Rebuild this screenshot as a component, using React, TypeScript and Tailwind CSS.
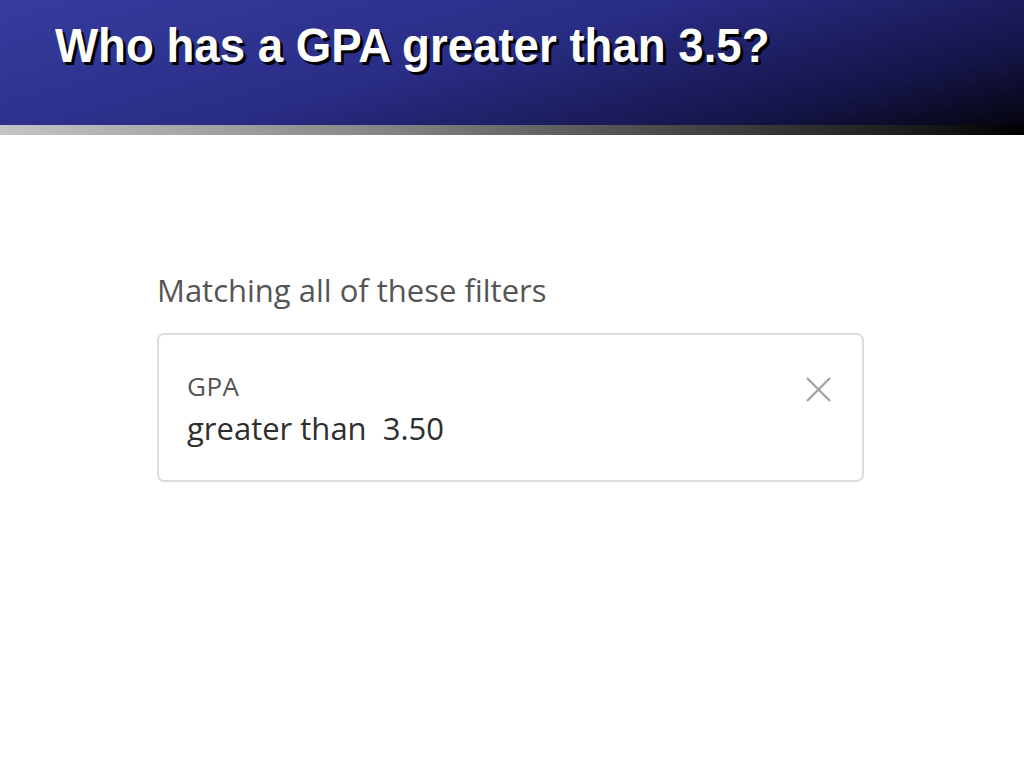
export default function App() {
  return (
    <div className="min-h-[768px] w-[1024px] bg-white">
      {/* Slide header */}
      <header className="h-[125px] bg-[linear-gradient(165deg,#363c9e_0%,#2a2d86_45%,#15154a_80%,#05050f_100%)] pl-[55px] pt-[14px]">
        <h1 className="origin-left scale-x-[0.95] whitespace-nowrap font-['Liberation_Sans',Arial,sans-serif] text-[48px] font-bold leading-[64px] text-white [text-shadow:3px_3px_0_#000]">
          Who has a GPA greater than 3.5?
        </h1>
      </header>
      <div className="h-[10px] bg-[linear-gradient(90deg,#c4c4c4_0%,#8a8a8a_35%,#4a4a4a_65%,#1a1a1a_90%,#000_100%)]" />

      {/* Filters */}
      <section className="pl-[157px] pt-[135px] font-['Open_Sans',sans-serif]">
        <p className="text-[31px] leading-[40px] text-[#555]">Matching all of these filters</p>
        <div className="mt-[23px] flex h-[149px] w-[707px] items-start justify-between rounded-[7px] border-2 border-[#dcdcdc] pl-[28px] pr-[31px] pt-[35px]">
          <div>
            <div className="text-[26px] leading-[32px] tracking-[0.02em] text-[#555]">GPA</div>
            <div className="mt-[7px] whitespace-pre text-[31px] leading-[38px] text-[#2e2e2e]">greater than  3.50</div>
          </div>
          <svg className="mt-[7px] h-[25px] w-[25px]" viewBox="0 0 25 25" fill="none" stroke="#a0a0a0" strokeWidth="2.2">
            <path d="M1 1 L24 24 M24 1 L1 24" />
          </svg>
        </div>
      </section>
    </div>
  );
}
